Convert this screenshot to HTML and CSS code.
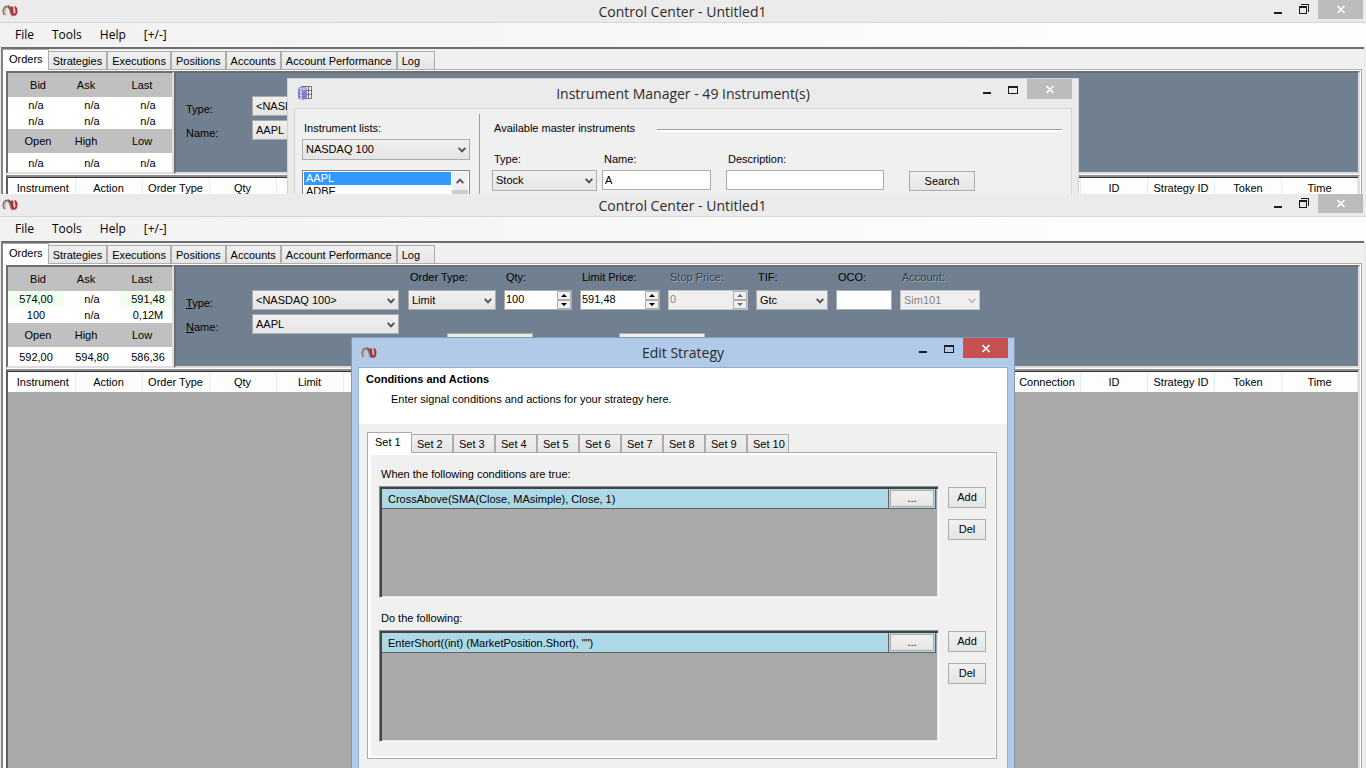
FILE: index.html
```html
<!DOCTYPE html>
<html lang="en">
<head>
<meta charset="utf-8">
<title>Control Center - Untitled1</title>
<link rel="stylesheet" href="styles.css">
</head>
<body>
<svg class="sprite" aria-hidden="true">
  <symbol id="logo" viewBox="0 0 16 12">
    <path d="M2.500 10C.3 6.500 1.500 1.500 5 1.500C9 1.500 7.500 9 10.500 10.800" fill="none" stroke="#94776f" stroke-width="1.800"/>
    <path d="M4 10.500C2.500 7 3.200 3.500 4.800 3.500" fill="none" stroke="#cdbab4" stroke-width="1.200"/>
    <path d="M6 1.200C10 1 8.800 8.500 11.500 10" fill="none" stroke="#6f4b46" stroke-width="1.500"/>
    <path d="M10 1.500C10.300 5 10.300 9.800 12.200 9.800C14.800 9.800 15.300 4.500 13 1.500" fill="none" stroke="#b8272f" stroke-width="2"/>
    <path d="M11.800 7C12.600 5 12.300 3 11.500 1.500" fill="none" stroke="#e3a0a2" stroke-width="1"/>
  </symbol>
  <symbol id="minimize" viewBox="0 0 12 12"><path d="M2 8h8v2H2z" fill="#1e1e1e"/></symbol>
  <symbol id="maximize" viewBox="0 0 12 12"><path d="M1 2h10v8H1zM2 4v5h8V4z" fill="#1e1e1e" fill-rule="evenodd"/></symbol>
  <symbol id="restore" viewBox="0 0 12 12"><path d="M1 2h8v8H1zM2 4v5h6V4zM3 0h8v8h-1V1H3z" fill="#1e1e1e" fill-rule="evenodd"/></symbol>
  <symbol id="close" viewBox="0 0 12 12"><path d="M2.500 2l7 7M9.500 2l-7 7" stroke="#fff" stroke-width="1.700"/></symbol>
  <symbol id="chevron" viewBox="0 0 8 6"><path d="M.7 .9L4 4.300L7.300 .9" fill="none" stroke="currentColor" stroke-width="1.900"/></symbol>
  <symbol id="spin" viewBox="0 0 14 18">
    <path d="M.5 .5h13v8H.500zM.5 9.500h13v8H.500z" fill="#f0f0f0" stroke="#acacac"/>
    <path d="M7 3l3 3H4zM7 15l3-3H4z" fill="currentColor"/>
  </symbol>
  <symbol id="database" viewBox="0 0 16 16">
    <path d="M4.500 1.500h10v12h-10zM4.500 5.500h10M4.500 9.500h10M11.500 1.500v12" fill="#f4f4fb" stroke="#70707e"/>
    <path d="M1 4v8.500c0 3 9 3 9 0V4z" fill="#8587c8"/>
    <path d="M3 5v9.300h2V5z" fill="#dadbf5"/>
    <ellipse cx="5.500" cy="4" rx="4.500" ry="1.800" fill="#b7b8e4" stroke="#7577ad" stroke-width=".6"/>
    <path d="M1 7.500c1 2 8 2 9 0M1 10.500c1 2 8 2 9 0" fill="none" stroke="#6567a4" stroke-width=".7"/>
  </symbol>
</svg>

<section class="window window-back">
  <header class="titlebar">
    <svg class="logo"><use href="#logo"/></svg>
    <h1 class="title">Control Center - Untitled1</h1>
    <div class="controls">
      <button class="control" aria-label="Minimize"><svg><use href="#minimize"/></svg></button>
      <button class="control" aria-label="Restore"><svg><use href="#restore"/></svg></button>
      <button class="control close" aria-label="Close"><svg><use href="#close"/></svg></button>
    </div>
  </header>
  <nav class="menubar">
    <button>File</button><button>Tools</button><button>Help</button><button>[+/-]</button>
  </nav>
  <div class="workspace">
    <div class="tabs" role="tablist">
      <button class="tab active" role="tab" aria-selected="true">Orders</button><button class="tab" role="tab">Strategies</button><button class="tab" role="tab">Executions</button><button class="tab" role="tab">Positions</button><button class="tab" role="tab">Accounts</button><button class="tab" role="tab">Account Performance</button><button class="tab tab-log" role="tab">Log</button>
    </div>
    <div class="panel">
      <div class="entry">
        <div class="sunken quote">
          <table>
            <tr class="head"><th>Bid</th><th>Ask</th><th>Last</th></tr>
            <tr><td>n/a</td><td>n/a</td><td>n/a</td></tr>
            <tr><td>n/a</td><td>n/a</td><td>n/a</td></tr>
            <tr class="head"><th>Open</th><th>High</th><th>Low</th></tr>
            <tr class="last"><td>n/a</td><td>n/a</td><td>n/a</td></tr>
          </table>
        </div>
        <form class="sunken order">
          <div class="instrument">
            <label for="type1">Type:</label>
            <span class="select"><select id="type1"><option>&lt;NASDAQ 100&gt;</option></select><svg><use href="#chevron"/></svg></span>
            <label for="name1">Name:</label>
            <span class="select"><select id="name1"><option>AAPL</option></select><svg><use href="#chevron"/></svg></span>
          </div>
        </form>
      </div>
      <div class="listing">
        <table>
          <thead><tr><th class="first">Instrument</th><th>Action</th><th>Order Type</th><th>Qty</th><td class="rest"></td><th>ID</th><th>Strategy ID</th><th>Token</th><th class="time">Time</th></tr></thead>
        </table>
      </div>
    </div>
  </div>

  <section class="dialog manager">
    <header class="titlebar">
      <svg class="logo square"><use href="#database"/></svg>
      <h2 class="title">Instrument Manager - 49 Instrument(s)</h2>
      <div class="controls">
        <button class="control" aria-label="Minimize"><svg><use href="#minimize"/></svg></button>
        <button class="control" aria-label="Maximize"><svg><use href="#maximize"/></svg></button>
        <button class="control close" aria-label="Close"><svg><use href="#close"/></svg></button>
      </div>
    </header>
    <div class="client">
      <div class="lists">
        <label for="lists">Instrument lists:</label>
        <span class="select"><select id="lists"><option>NASDAQ 100</option></select><svg><use href="#chevron"/></svg></span>
        <div class="listbox">
          <ul role="listbox"><li class="selected" role="option">AAPL</li><li role="option">ADBE</li></ul>
          <div class="scroll"><svg><use href="#chevron"/></svg><span></span></div>
        </div>
      </div>
      <form class="search">
        <h3 class="group">Available master instruments</h3>
        <div class="criteria">
          <div class="field type"><label for="kind">Type:</label><span class="select"><select id="kind"><option>Stock</option></select><svg><use href="#chevron"/></svg></span></div>
          <div class="field name"><label for="symbol">Name:</label><input id="symbol" type="text" value="A"></div>
          <div class="field description"><label for="desc">Description:</label><input id="desc" type="text"></div>
          <button class="button" type="button">Search</button>
        </div>
      </form>
    </div>
  </section>
</section>

<section class="window window-front">
  <header class="titlebar">
    <svg class="logo"><use href="#logo"/></svg>
    <h1 class="title">Control Center - Untitled1</h1>
    <div class="controls">
      <button class="control" aria-label="Minimize"><svg><use href="#minimize"/></svg></button>
      <button class="control" aria-label="Restore"><svg><use href="#restore"/></svg></button>
      <button class="control close" aria-label="Close"><svg><use href="#close"/></svg></button>
    </div>
  </header>
  <nav class="menubar">
    <button>File</button><button>Tools</button><button>Help</button><button>[+/-]</button>
  </nav>
  <div class="workspace">
    <div class="tabs" role="tablist">
      <button class="tab active" role="tab" aria-selected="true">Orders</button><button class="tab" role="tab">Strategies</button><button class="tab" role="tab">Executions</button><button class="tab" role="tab">Positions</button><button class="tab" role="tab">Accounts</button><button class="tab" role="tab">Account Performance</button><button class="tab tab-log" role="tab">Log</button>
    </div>
    <div class="panel">
      <div class="entry">
        <div class="sunken quote">
          <table>
            <tr class="head"><th>Bid</th><th>Ask</th><th>Last</th></tr>
            <tr><td class="up">574,00</td><td>n/a</td><td class="up">591,48</td></tr>
            <tr><td>100</td><td>n/a</td><td>0,12M</td></tr>
            <tr class="head"><th>Open</th><th>High</th><th>Low</th></tr>
            <tr class="last"><td>592,00</td><td>594,80</td><td>586,36</td></tr>
          </table>
        </div>
        <form class="sunken order">
          <div class="instrument">
            <label for="type2"><u>T</u>ype:</label>
            <span class="select"><select id="type2"><option>&lt;NASDAQ 100&gt;</option></select><svg><use href="#chevron"/></svg></span>
            <label for="name2"><u>N</u>ame:</label>
            <span class="select"><select id="name2"><option>AAPL</option></select><svg><use href="#chevron"/></svg></span>
          </div>
          <div class="ticket">
            <div class="fields">
              <div class="field w88"><label for="otype">Order Type:</label><span class="select"><select id="otype"><option>Limit</option></select><svg><use href="#chevron"/></svg></span></div>
              <div class="field w68"><label for="qty">Qty:</label><span class="spinner"><input id="qty" type="text" value="100"><svg><use href="#spin"/></svg></span></div>
              <div class="field w80"><label for="limit">Limit Price:</label><span class="spinner"><input id="limit" type="text" value="591,48"><svg><use href="#spin"/></svg></span></div>
              <div class="field w80 disabled"><label for="stop">Stop Price:</label><span class="spinner"><input id="stop" type="text" value="0" disabled><svg><use href="#spin"/></svg></span></div>
              <div class="field w72"><label for="tif">TIF:</label><span class="select"><select id="tif"><option>Gtc</option></select><svg><use href="#chevron"/></svg></span></div>
              <div class="field w56"><label for="oco">OCO:</label><span class="spinner"><input id="oco" type="text"></span></div>
              <div class="field w80 disabled"><label for="account">Account:</label><span class="select"><select id="account" disabled><option>Sim101</option></select><svg><use href="#chevron"/></svg></span></div>
            </div>
            <div class="actions">
              <button class="button green" type="button"></button>
              <button class="button" type="button"></button>
            </div>
          </div>
        </form>
      </div>
      <div class="listing">
        <table>
          <thead><tr><th class="first">Instrument</th><th>Action</th><th>Order Type</th><th>Qty</th><th>Limit</th><td class="rest"></td><th>Connection</th><th>ID</th><th>Strategy ID</th><th>Token</th><th class="time">Time</th></tr></thead>
        </table>
      </div>
    </div>
  </div>

  <section class="dialog strategy">
    <header class="titlebar">
      <svg class="logo"><use href="#logo"/></svg>
      <h2 class="title">Edit Strategy</h2>
      <div class="controls">
        <button class="control" aria-label="Minimize"><svg><use href="#minimize"/></svg></button>
        <button class="control" aria-label="Maximize"><svg><use href="#maximize"/></svg></button>
        <button class="control close" aria-label="Close"><svg><use href="#close"/></svg></button>
      </div>
    </header>
    <div class="client">
      <div class="intro">
        <h3>Conditions and Actions</h3>
        <p>Enter signal conditions and actions for your strategy here.</p>
      </div>
      <div class="sets">
        <div class="tabs" role="tablist">
          <button class="tab active" role="tab" aria-selected="true">Set 1</button><button class="tab" role="tab">Set 2</button><button class="tab" role="tab">Set 3</button><button class="tab" role="tab">Set 4</button><button class="tab" role="tab">Set 5</button><button class="tab" role="tab">Set 6</button><button class="tab" role="tab">Set 7</button><button class="tab" role="tab">Set 8</button><button class="tab" role="tab">Set 9</button><button class="tab" role="tab">Set 10</button>
        </div>
        <div class="set">
          <div class="block">
            <h4>When the following conditions are true:</h4>
            <div class="row">
              <div class="grid"><div class="rule"><span>CrossAbove(SMA(Close, MAsimple), Close, 1)</span><button class="button">...</button></div></div>
              <div class="side"><button class="button">Add</button><button class="button">Del</button></div>
            </div>
          </div>
          <div class="block">
            <h4>Do the following:</h4>
            <div class="row">
              <div class="grid"><div class="rule"><span>EnterShort((int) (MarketPosition.Short), "")</span><button class="button">...</button></div></div>
              <div class="side"><button class="button">Add</button><button class="button">Del</button></div>
            </div>
          </div>
        </div>
      </div>
    </div>
  </section>
</section>
</body>
</html>
```
FILE: styles.css
```css
* { box-sizing: border-box; }

html, body { height: 100%; }

body {
  margin: 0;
  display: flex;
  flex-direction: column;
  overflow: hidden;
  font: 11px/16px "Liberation Sans", Arial, sans-serif;
  color: #000;
  background: #ebebeb;
}

h1, h2, h3, h4, p, ul { margin: 0; padding: 0; font: inherit; list-style: none; }
button, input, select { font: inherit; color: inherit; margin: 0; border-radius: 0; }
table { border-collapse: collapse; table-layout: fixed; width: 100%; }
th, td { padding: 0; font-weight: normal; text-align: center; }
svg { display: block; }
.sprite { position: absolute; width: 0; height: 0; }

/* Windows */
.window {
  position: relative;
  display: flex;
  flex-direction: column;
  overflow: hidden;
  background: #ebebeb;
}
.window-back { flex: 0 0 194px; }
.window-front { flex: 1; }

.titlebar {
  display: grid;
  grid-template-columns: 1fr auto 1fr;
  height: 23px;
  padding: 0 3px 0 2px;
  border-bottom: 1px solid #d6d6d6;
}
.logo { width: 16px; height: 12px; margin-top: 5px; }
.logo.square { height: 16px; }
.title {
  font: 14px/24px "Open Sans", "Noto Sans", sans-serif;
  color: #2b2b2b;
}
.controls { display: flex; justify-content: flex-end; height: 19px; }
.control {
  width: 26px;
  height: 19px;
  padding: 4px 7px 3px;
  border: 0;
  background: none;
}
.control svg { width: 12px; height: 12px; }
.control.close { width: 45px; padding-left: 17px; margin-left: 1px; background: #bcbcbc; }

.menubar {
  display: flex;
  gap: 18px;
  height: 24px;
  padding-left: 15px;
  background: linear-gradient(90deg, #f1f1f1, #fdfdfd 80%);
}
.menubar button {
  padding: 0;
  border: 0;
  background: none;
  font: 12px/24px "Open Sans", "Noto Sans", sans-serif;
}

.workspace {
  flex: 1;
  display: flex;
  flex-direction: column;
  margin: 0 2px 0 1px;
  padding-right: 2px;
  border: solid #828282;
  border-width: 2px 0 0 2px;
  border-top-color: #6e6e6e;
  background: #f0f0f0;
}

/* Tabs */
.tabs { display: flex; align-items: flex-end; height: 20px; }
.tab {
  height: 18px;
  padding: 0 4px;
  border: 1px solid #acacac;
  border-bottom: 0;
  background: linear-gradient(#f0f0f0, #e5e5e5);
  line-height: 18px;
  white-space: nowrap;
}
.tab.active {
  position: relative;
  height: 21px;
  margin-bottom: -1px;
  padding: 0 5px 3px 6px;
  border-left: 0;
  background: #fff;
}
.tab.active + .tab { border-left: 0; }
.tab-log { padding-right: 14px; }

.panel {
  flex: 1;
  display: flex;
  flex-direction: column;
  padding: 1px 1px 0 3px;
  border: solid #acacac;
  border-width: 1px 1px 0 0;
  background: #fff;
}
.entry { display: flex; height: 103px; margin-bottom: 1px; }
.sunken {
  border: 2px solid;
  border-color: #6e6e6e #dedede #dedede #6e6e6e;
}

/* Quote table */
.quote { width: 168px; background: #fff; }
.quote tr { height: 16px; }
.quote .head { height: 24px; background: #c0c0c0; }
.quote .last { height: 19px; }
.quote th:nth-child(1) { width: 56px; padding-left: 4px; }
.quote th:nth-child(2) { width: 56px; padding-right: 12px; }
.quote th:nth-child(3) { padding-right: 8px; }
.quote td:nth-child(3) { padding-left: 4px; }
.quote .up { background: #f0fff0; }

/* Order entry */
.order { flex: 1; display: flex; gap: 9px; padding-left: 10px; background: #708090; }
.instrument {
  display: grid;
  grid-template-columns: 66px 147px;
  grid-auto-rows: 20px;
  row-gap: 4px;
  padding-top: 23px;
}
.instrument label { padding-top: 5px; }

.select { position: relative; display: block; height: 20px; }
.select select {
  width: 100%;
  height: 100%;
  padding: 0 16px 1px 3px;
  appearance: none;
  border: 1px solid #acacac;
  background: linear-gradient(#f0f0f0, #e5e5e5);
}
.select svg {
  position: absolute;
  right: 4px;
  top: 8px;
  width: 8px;
  height: 6px;
  color: #505050;
  pointer-events: none;
}
.field { display: flex; flex-direction: column; }
.field label { white-space: nowrap; }
.fields { display: flex; gap: 8px; padding-top: 2px; }
.fields label { height: 21px; padding-left: 2px; }
.spinner { display: block; position: relative; height: 20px; }
input {
  width: 100%;
  height: 20px;
  padding: 0 2px;
  border: 1px solid #acacac;
  background: #fff;
}
.spinner input { padding-bottom: 2px; padding-left: 1px; }
.spinner svg { position: absolute; right: 1px; top: 1px; width: 14px; height: 18px; }
.w56 { width: 56px; }
.w68 { width: 68px; }
.w72 { width: 72px; }
.w80 { width: 80px; }
.w88 { width: 88px; }
.disabled label { color: #353d46; text-shadow: 1px 1px 0 #a3adb7; }
.disabled input, .disabled select {
  color: #838383;
  opacity: 1;
  border-color: #c6c6c6;
  background: #efefef;
}
.disabled .select svg { color: #bfbfbf; }
.disabled .spinner svg { color: #6d6d6d; }

.actions { display: flex; gap: 86px; padding: 23px 0 0 39px; }
.actions .button { width: 86px; }
.button {
  height: 21px;
  padding: 0 0 2px;
  border: 1px solid #acacac;
  background: linear-gradient(#f0f0f0, #e5e5e5);
  line-height: 16px;
}
.button.green { background: #e3efe3; }

/* Order list */
.listing {
  flex: 1;
  padding-top: 1px;
  border: solid;
  border-width: 2px 2px 0 2px;
  border-color: #8e8e8e #dedede #fff #5c5c5c;
  background: #a9a9a9;
  box-shadow: inset 0 1px #333;
}
.listing th, .listing td { height: 20px; border-right: 1px solid #e3edf8; background: #fdfdfd; }
.listing th { width: 67px; }
.listing .first { padding-left: 3px; }
.listing .time { width: 76px; }

/* Dialogs */
.dialog {
  position: absolute;
  left: 50%;
  transform: translateX(-50%);
  display: flex;
  flex-direction: column;
  padding: 0 6px;
  border: 1px solid #d2d2d2;
}
.dialog .titlebar { height: 29px; padding: 0; border: 0; }
.dialog .titlebar .title { line-height: 30px; }
.dialog .logo { margin: 9px 0 0 3px; }
.dialog .logo.square { margin-top: 6px; }
.dialog .control { height: 20px; }

.manager { top: 78px; width: 792px; height: 360px; background: #ebebeb; }
.manager .client {
  flex: 1;
  display: grid;
  grid-template-columns: 178px 1fr;
  padding: 5px 9px 0 7px;
  border: 1px solid #d6d6d6;
  background: #f0f0f0;
}
.lists { padding: 6px 9px 0 0; border-right: 1px solid #a0a0a0; }
.lists label { display: block; padding-left: 2px; height: 19px; }
.lists .select { height: 21px; }
.listbox { display: flex; height: 180px; margin-top: 10px; padding: 1px; border: 1px solid #828790; background: #fff; }
.listbox ul { flex: 1; line-height: 13px; }
.listbox li { padding-left: 2px; }
.listbox .selected { background: #3399ff; color: #fff; }
.scroll { width: 16px; margin-left: 1px; background: #f0f0f0; color: #505050; }
.scroll svg { width: 8px; height: 6px; margin: 6px 4px; transform: rotate(180deg); }
.scroll span { display: block; height: 60px; background: #cdcdcd; }
.search { padding: 6px 0 0 12px; }
.group { display: flex; align-items: center; gap: 22px; height: 16px; padding-left: 2px; }
.group::after { content: ""; flex: 1; height: 2px; margin-top: 4px; border-top: 1px solid #a0a0a0; background: #fff; }
.criteria { display: flex; align-items: flex-end; padding-top: 15px; }
.criteria label { height: 19px; padding-left: 2px; }
.criteria .select { height: 21px; }
.criteria .type { width: 105px; margin-right: 5px; }
.criteria .name { width: 109px; margin-right: 15px; }
.criteria .description { width: 158px; margin-right: 25px; }
.criteria .name input, .criteria .description input { margin-bottom: 1px; }
.criteria .button { width: 66px; height: 20px; padding: 0; }

.strategy { top: 143px; bottom: 0; width: 664px; border-color: #8098b3; border-bottom: 0; background: #b0cae8; }
.strategy .close { background: #c75050; }
.strategy .client { flex: 1; border: 1px solid #93afd0; border-width: 1px 1px 0; background: #f0f0f0; }
.intro { height: 56px; padding: 3px 7px; background: #fff; }
.intro h3 { font-weight: bold; }
.intro p { padding: 4px 25px; }
.sets { padding: 8px 10px 0 8px; }
.sets .tab { width: 42px; padding: 0 0 0 5px; text-align: left; }
.sets .tab.active { width: 45px; padding: 0 0 3px 7px; border-left: 1px solid #acacac; }
.sets .tab.active + .tab { width: 41px; }
.set {
  display: flex;
  flex-direction: column;
  gap: 12px;
  padding: 13px 10px 16px 11px;
  border: 1px solid #acacac;
  box-shadow: inset 3px 0 #fff, inset -1px 2px #fff, inset 0 -2px #fff;
}
.block h4 { height: 20px; padding-left: 2px; }
.row { display: flex; gap: 9px; }
.grid {
  flex: 1;
  height: 112px;
  padding: 2px 2px 1px;
  border: 1px solid;
  border-color: #8e8e8e #fff #fff #8e8e8e;
  background: #a9a9a9;
  box-shadow: inset 2px 2px #444, inset -1px -1px #e3e3e3;
}
.rule {
  display: flex;
  height: 20px;
  border-right: 1px solid #5f6367;
  border-bottom: 1px solid #5f6367;
  background: #add8e6;
  line-height: 20px;
}
.rule span { flex: 1; padding-left: 6px; border-right: 1px solid #5f6367; }
.rule .button { width: 44px; height: 17px; margin: 1px 1px 1px 1px; padding: 0; line-height: 15px; }
.side { display: flex; flex-direction: column; gap: 11px; padding-top: 1px; }
.side .button { width: 38px; }
```
